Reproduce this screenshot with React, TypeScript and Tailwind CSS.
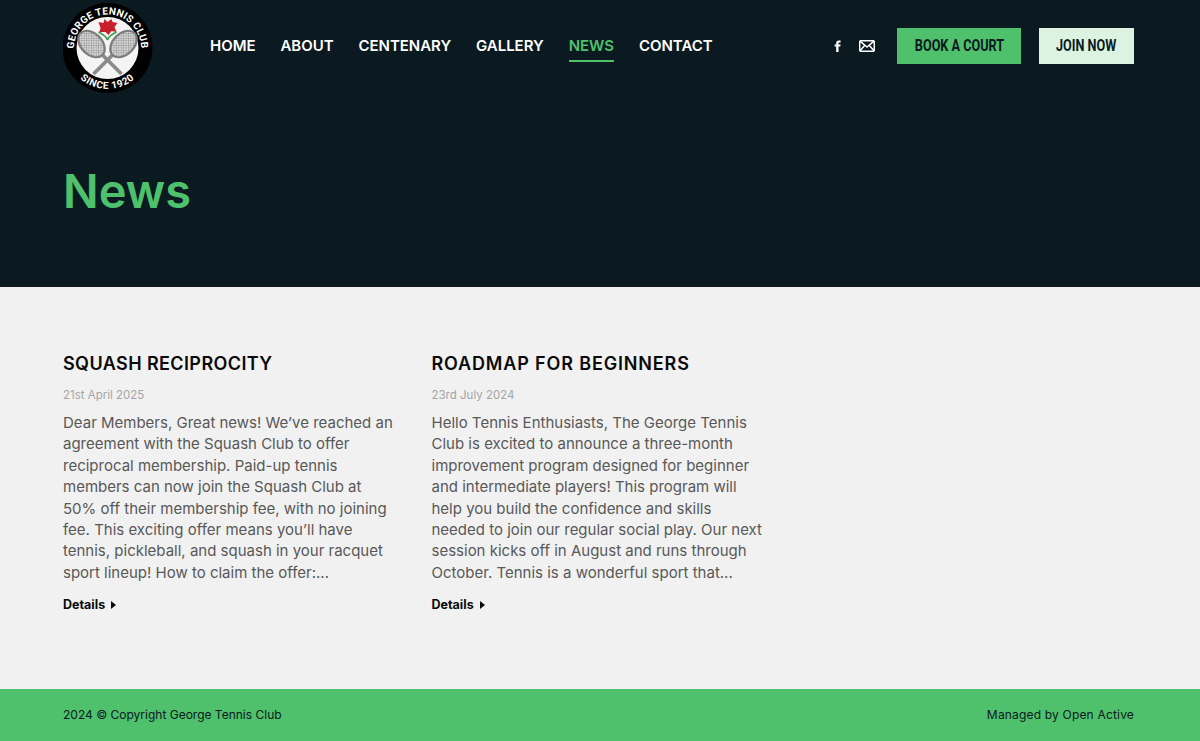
import React from 'react';

const navItems = ['HOME', 'ABOUT', 'CENTENARY', 'GALLERY', 'NEWS', 'CONTACT'];

const posts = [
  {
    title: 'SQUASH RECIPROCITY',
    titleClass: 'tracking-[0.4px]',
    date: '21st April 2025',
    lines: [
      'Dear Members, Great news! We’ve reached an',
      'agreement with the Squash Club to offer',
      'reciprocal membership. Paid-up tennis',
      'members can now join the Squash Club at',
      '50% off their membership fee, with no joining',
      'fee. This exciting offer means you’ll have',
      'tennis, pickleball, and squash in your racquet',
      'sport lineup! How to claim the offer:...',
    ],
  },
  {
    title: 'ROADMAP FOR BEGINNERS',
    titleClass: 'tracking-[0.85px]',
    date: '23rd July 2024',
    lines: [
      'Hello Tennis Enthusiasts, The George Tennis',
      'Club is excited to announce a three-month',
      'improvement program designed for beginner',
      'and intermediate players! This program will',
      'help you build the confidence and skills',
      'needed to join our regular social play. Our next',
      'session kicks off in August and runs through',
      'October. Tennis is a wonderful sport that...',
    ],
  },
];

const Racquet = ({ flip }: { flip?: boolean }) => (
  <g transform={flip ? 'translate(92 0) scale(-1 1)' : undefined}>
    <line x1="41" y1="53" x2="60" y2="72" stroke="#8a8a8a" strokeWidth="3.8" />
    <ellipse cx="30" cy="42" rx="10.5" ry="15.5" transform="rotate(-45 30 42)" fill="url(#strings)" stroke="#7c7c7c" strokeWidth="2.2" />
  </g>
);

const Logo = () => (
  <svg width="90" height="92" viewBox="1.5 0 90 92" className="shrink-0">
    <defs>
      <pattern id="strings" width="2.4" height="2.4" patternUnits="userSpaceOnUse" patternTransform="rotate(45)">
        <rect width="2.4" height="2.4" fill="#d8d8d8" />
        <path d="M0 0H2.4M0 0V2.4" stroke="#777" strokeWidth="0.7" />
      </pattern>
      <path id="arcTop" d="M 46 79.5 A 33.5 33.5 0 0 1 46 12.5 A 33.5 33.5 0 0 1 46 79.5" />
      <path id="arcBottom" d="M 5 46 A 41 41 0 0 0 87 46" />
    </defs>
    <circle cx="46" cy="46" r="45" fill="#000" />
    <circle cx="46" cy="46" r="31" fill="#f4f4f4" />
    <text fill="#fff" fontFamily="Roboto, sans-serif" fontWeight="700" fontSize="10" letterSpacing="0.2">
      <textPath href="#arcTop" startOffset="50%" textAnchor="middle">GEORGE TENNIS CLUB</textPath>
    </text>
    <text fill="#fff" fontFamily="Roboto, sans-serif" fontWeight="700" fontSize="10" letterSpacing="0.6">
      <textPath href="#arcBottom" startOffset="50%" textAnchor="middle">SINCE 1920</textPath>
    </text>
    <Racquet />
    <Racquet flip />
    <path d="M46 38 C45 34 41 32 37 30 M46 38 C47 34 51 32 55 30" stroke="#3f9a4e" strokeWidth="1.6" fill="none" />
    <path d="M37 20 L42 21 L43 17 L46 20 L50 17 L51 20 L56 21 L53 25 L55 30 L50 29 L47 33 L44 30 L38 30 L39 26 Z" fill="#c8202a" />
  </svg>
);

export default function App() {
  return (
    <div className="min-h-[741px] flex flex-col bg-[#f1f1f1] font-['Inter',sans-serif]">
      <div className="h-[287px] bg-[#0b1a20] pl-[63px] pr-[66px]">
        <div className="h-[91px] flex items-start">
          <div className="pt-[2px]">
            <Logo />
          </div>
          <nav className="ml-[57px] pt-[37px] flex gap-[25px]">
            {navItems.map((item) => (
              <a
                key={item}
                className={`pb-[5px] text-[15px] leading-[18px] font-semibold tracking-[-0.04px] border-b-2 ${
                  item === 'NEWS' ? 'text-[#4fc06c] border-[#4fc06c]' : 'text-white border-transparent'
                }`}
              >
                {item}
              </a>
            ))}
          </nav>
          <div className="ml-auto pt-[28px] flex items-center">
            <svg width="8" height="12" viewBox="0 0 8 12" fill="#fff">
              <path d="M2.2 12V6.6H0.6V4.5H2.2V3C2.2 1.2 3.2 0.4 4.8 0.4H6.6V2.4H5.4C4.7 2.4 4.5 2.7 4.5 3.3V4.5H6.6L6.3 6.6H4.5V12Z" />
            </svg>
            <svg width="16" height="12" viewBox="0 0 16 12" fill="none" stroke="#fff" strokeWidth="1.5" className="ml-[17px]">
              <rect x="0.7" y="0.7" width="14.6" height="10.6" rx="1.5" />
              <path d="M1 1.2L8 7L15 1.2M1 10.8L5.8 5.2M15 10.8L10.2 5.2" />
            </svg>
            <a className="ml-[22px] w-[124px] h-[36px] flex items-center justify-center bg-[#4fc06c] text-[#0b1a20] font-['Roboto',sans-serif] font-bold text-[16px]">
              <span className="inline-block whitespace-nowrap scale-x-[0.79]">BOOK A COURT</span>
            </a>
            <a className="ml-[18px] w-[95px] h-[36px] flex items-center justify-center bg-[#dcf3e1] text-[#0b1a20] font-['Roboto',sans-serif] font-bold text-[16px]">
              <span className="inline-block whitespace-nowrap scale-x-[0.79]">JOIN NOW</span>
            </a>
          </div>
        </div>
        <h1 className="mt-[69px] text-[47px] leading-[62px] font-semibold text-[#4fc06c]">News</h1>
      </div>

      <main className="flex-1 pl-[63px] pr-[66px] pt-[65px] grid grid-cols-3 gap-x-[34.5px] content-start">
        {posts.map((post) => (
          <article key={post.title}>
            <h2 className={`text-[18px] leading-[24px] font-semibold text-[#0b0b0b] ${post.titleClass}`}>{post.title}</h2>
            <p className="mt-[10px] text-[11.5px] leading-[18px] text-[#a5a5a5]">{post.date}</p>
            <p className="mt-[8px] text-[15px] leading-[21.4px] text-[#585858] whitespace-nowrap">
              {post.lines.map((line) => (
                <span key={line} className="block">{line}</span>
              ))}
            </p>
            <a className="mt-[13px] flex items-center gap-[6px] text-[12.5px] leading-[18px] font-bold text-[#0b0b0b]">
              Details
              <svg width="5" height="8" viewBox="0 0 5 8" fill="#0b0b0b">
                <path d="M0 0L5 4L0 8Z" />
              </svg>
            </a>
          </article>
        ))}
      </main>

      <footer className="h-[52px] bg-[#4fc06c] pl-[63px] pr-[66px] flex items-center justify-between text-[12px] text-[#0b1a20]">
        <span>2024 © Copyright George Tennis Club</span>
        <span className="tracking-[0.18px]">Managed by Open Active</span>
      </footer>
    </div>
  );
}
